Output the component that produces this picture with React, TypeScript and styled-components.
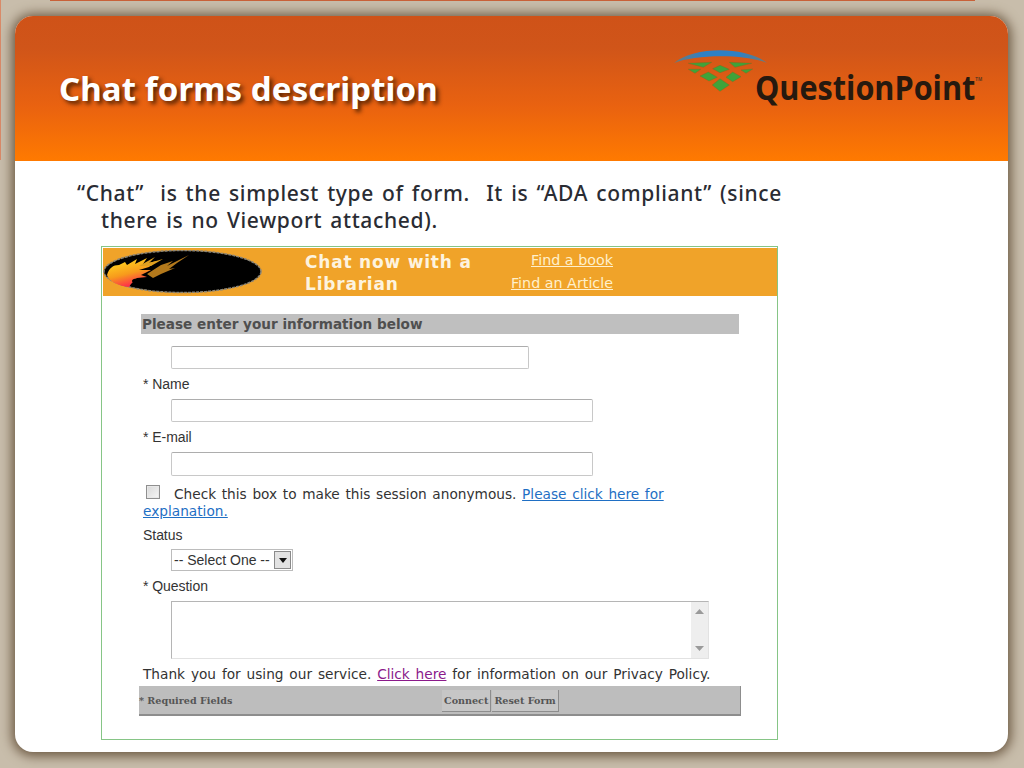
import React from 'react';
import styled, { createGlobalStyle } from 'styled-components';

const GlobalStyle = createGlobalStyle`
  html, body {
    margin: 0;
    padding: 0;
  }
  body {
    width: 1024px;
    height: 768px;
    overflow: hidden;
    font-family: "Liberation Sans", Arial, sans-serif;
  }
`;

const Slide = styled.div`
  box-sizing: border-box;
  width: 1024px;
  height: 768px;
  padding: 16px 16px 16px 15px;
  background:
    linear-gradient(#c9623a, #c9623a) 50px 0 / 925px 1px no-repeat,
    linear-gradient(#d98a68, #d98a68) 0 0 / 1px 160px no-repeat,
    #c8bdab;
`;

const Card = styled.div`
  height: 736px;
  border-radius: 18px;
  background: #ffffff;
  overflow: hidden;
  box-shadow: 0 1px 12px 3px #6a5740;
`;

const Header = styled.header`
  display: flex;
  justify-content: space-between;
  height: 145px;
  background: linear-gradient(#cf5218 0%, #d05519 22%, #e96210 62%, #ff7a00 100%);
`;

const Title = styled.h1`
  margin: 52px 0 0 44px;
  font-family: "Noto Sans", "Open Sans", sans-serif;
  font-size: 33px;
  line-height: 42px;
  font-weight: 700;
  letter-spacing: 0.1px;
  color: #ffffff;
  text-shadow: 3px 3px 4px rgba(60, 25, 0, 0.85);
`;

const Logo = styled.div`
  display: flex;
  flex-direction: column;
  width: 334px;
  padding-top: 33px;
`;

const LogoWord = styled.div`
  display: flex;
  width: 260px;
  margin: -24px 0 0 81px;
  font-family: "Open Sans", "Noto Sans", sans-serif;
  font-size: 34px;
  line-height: 36px;
  font-weight: 700;
  white-space: nowrap;
  color: #26190f;
  transform: scaleX(0.9);
  transform-origin: left center;
`;

const LogoMark = styled.span`
  font-size: 5px;
  line-height: 20px;
  color: #5a3a20;
`;

const Body = styled.main`
  padding: 19px 0 0 62px;
`;

const Intro = styled.p`
  width: 713px;
  margin: 0;
  padding-left: 24px;
  box-sizing: border-box;
  text-indent: -24px;
  font-family: "Noto Sans", "Open Sans", sans-serif;
  font-size: 21px;
  line-height: 27px;
  font-weight: 500;
  letter-spacing: 0.66px;
  word-spacing: 2px;
  white-space: pre-wrap;
  color: #2a2c33;
`;

const FormFrame = styled.section`
  box-sizing: border-box;
  width: 677px;
  height: 494px;
  margin: 12px 0 0 24px;
  padding: 1px 0 1px 1px;
  border: 1px solid #86c586;
`;

const Banner = styled.div`
  display: flex;
  align-items: flex-start;
  height: 48px;
  background: #f0a329;
`;

const BannerTitle = styled.div`
  width: 190px;
  margin: 3px 0 0 42px;
  font-family: "DejaVu Sans", Verdana, sans-serif;
  font-size: 17px;
  line-height: 22px;
  font-weight: 700;
  letter-spacing: 0.8px;
  color: #fdf3df;
`;

const BannerLinks = styled.div`
  display: flex;
  flex-direction: column;
  align-items: flex-end;
  width: 118px;
  padding-top: 1px;
  font-family: "DejaVu Sans", Verdana, sans-serif;
  font-size: 14.3px;
  line-height: 23px;
`;

const BannerLink = styled.a`
  color: #fff0cc;
  text-decoration: underline;
`;

const FormBody = styled.form`
  display: flex;
  flex-direction: column;
  align-items: flex-start;
  padding: 18px 0 0 38px;
`;

const SectionBar = styled.div`
  box-sizing: border-box;
  width: 598px;
  height: 20px;
  padding-left: 1px;
  font-family: "DejaVu Sans", Verdana, sans-serif;
  font-size: 13.6px;
  line-height: 21px;
  font-weight: 700;
  color: #4f4f4f;
  background: #bfbfbf;
`;

const TextInput = styled.input<{ $width: number; $height: number; $top: number }>`
  box-sizing: border-box;
  display: block;
  width: ${p => p.$width}px;
  height: ${p => p.$height}px;
  margin: ${p => p.$top}px 0 0 30px;
  padding: 0 3px;
  border: 1px solid #c8c8c8;
  border-top-color: #adadad;
  border-radius: 2px;
  background: #ffffff;
`;

const FieldLabel = styled.label<{ $top: number }>`
  display: block;
  margin: ${p => p.$top}px 0 0 2px;
  font-size: 14px;
  letter-spacing: -0.05px;
  line-height: 16px;
  color: #333333;
`;

const AnonRow = styled.div`
  width: 560px;
  margin: 9px 0 0 2px;
  font-family: "DejaVu Sans", Verdana, sans-serif;
  font-size: 13.7px;
  line-height: 17px;
  word-spacing: 1.3px;
  color: #333333;
`;

const CheckBox = styled.span`
  box-sizing: border-box;
  display: inline-block;
  width: 14px;
  height: 14px;
  margin: 0 14px 0 3px;
  vertical-align: 0;
  border: 1px solid #8f8f8f;
  background: linear-gradient(135deg, #d8d8d8, #f6f6f6);
  box-shadow: inset 0 0 0 1px #e8e8e8;
`;

const TextLink = styled.a<{ $visited?: boolean }>`
  color: ${p => (p.$visited ? '#8b1a8b' : '#1f6fc4')};
  text-decoration: underline;
`;

const SelectBox = styled.div`
  box-sizing: border-box;
  display: flex;
  align-items: center;
  justify-content: space-between;
  width: 122px;
  height: 22px;
  margin: 6px 0 0 30px;
  padding: 0 1px 0 2px;
  font-size: 14px;
  color: #333333;
  border: 1px solid #bcbcbc;
`;

const SelectArrow = styled.span`
  box-sizing: border-box;
  display: flex;
  align-items: center;
  justify-content: center;
  width: 17px;
  height: 18px;
  border: 1px solid #8a8a8a;
  background: #e2e2e2;
`;

const AreaBox = styled.div`
  box-sizing: border-box;
  display: flex;
  justify-content: flex-end;
  width: 538px;
  height: 58px;
  margin: 7px 0 0 30px;
  border: 1px solid #b5b5b5;
  border-right-color: #e2e2e2;
  border-bottom-color: #e2e2e2;
`;

const ScrollBar = styled.div`
  display: flex;
  flex-direction: column;
  align-items: center;
  justify-content: space-between;
  width: 17px;
  padding: 7px 0;
  box-sizing: border-box;
  background: #eeeeee;
`;

const Thanks = styled.p`
  margin: 7px 0 0 2px;
  font-family: "DejaVu Sans", Verdana, sans-serif;
  font-size: 13.7px;
  line-height: 17px;
  word-spacing: 1.5px;
  color: #333333;
`;

const FooterBar = styled.div`
  box-sizing: border-box;
  display: flex;
  align-items: center;
  width: 602px;
  height: 30px;
  margin: 3px 0 0 -2px;
  padding-top: 1px;
  font-family: "DejaVu Serif", Georgia, serif;
  font-size: 9.6px;
  font-weight: 700;
  color: #555555;
  background: #bdbdbd;
  border-right: 1px solid #8d8d8d;
  border-bottom: 2px solid #8d8d8d;
`;

const FooterNote = styled.span`
  width: 303px;
`;

const FooterButton = styled.span`
  box-sizing: border-box;
  display: flex;
  align-items: center;
  height: 22px;
  padding: 0 2px;
  margin-right: 1px;
  border-right: 1px solid #8d8d8d;
  border-bottom: 1px solid #8d8d8d;
  background: #c6c6c6;
`;

const LogoIcon = () => (
  <svg width="96" height="44" viewBox="0 0 96 44">
    <defs>
      <linearGradient id="arcFill" x1="0" x2="1" y1="0" y2="0">
        <stop offset="0" stopColor="#6d7a78" />
        <stop offset="0.3" stopColor="#2f80c4" />
        <stop offset="0.7" stopColor="#2f80c4" />
        <stop offset="1" stopColor="#6d7a78" />
      </linearGradient>
    </defs>
    <path d="M0 14C20 -3 72 -3 93 14C72 5 22 5 0 14Z" fill="url(#arcFill)" />
    <g fill="#3fa33a" stroke="#7a6a20" strokeWidth="0.4">
      <path d="M14.300 14.300L37.700 13.300L29.300 18.300Z" />
      <path d="M55.300 13.300L77.700 14.300L61 18.300Z" />
      <path d="M14.300 20.300L26.700 20.300L21 24.300Z" />
      <path d="M67 21L78.700 20L72 24.300Z" />
      <path d="M46 16.300L55.300 20.300L46 23.700L38.700 19.700Z" />
      <path d="M34.300 23L43.300 28.300L35 32L26 27Z" />
      <path d="M58.700 23L67 27.700L58.700 32.700L52 28.300Z" />
      <path d="M46 29.700L55.300 36L46 42.300L38.300 36Z" />
    </g>
  </svg>
);

const FlameBadge = () => (
  <svg width="160" height="44" viewBox="0 0 160 44" style={{ flex: 'none', margin: '2px 0 0 0' }}>
    <defs>
      <linearGradient id="flameFill" x1="0" x2="0.35" y1="0.2" y2="1">
        <stop offset="0" stopColor="#ffd21f" />
        <stop offset="0.55" stopColor="#f79a1c" />
        <stop offset="1" stopColor="#ff2f4a" />
      </linearGradient>
    </defs>
    <ellipse cx="79.500" cy="21.500" rx="78.500" ry="21" fill="#000000" stroke="#8a8578" strokeWidth="1.500" strokeDasharray="3 1" />
    <path d="M4 25C6 18 10 15 16 15L22 12L24 15L34 9L32 14L44 8L40 14L54 11L46 17L36 20L48 20L38 25L44 27L34 28L28 34L26 37C16 36 6 32 4 25Z" fill="url(#flameFill)" />
    <path d="M44 24L58 15L70 11L64 16L86 5L74 13L66 19L72 18L58 24L50 28Z" fill="#b3791c" />
    <path d="M36 16L52 7L46 13L60 9L48 16Z" fill="#e0a020" />
    <ellipse cx="34" cy="31" rx="5" ry="2.500" fill="#000000" />
  </svg>
);

export default function App() {
  return (
    <>
      <GlobalStyle />
      <Slide>
        <Card>
          <Header>
            <Title>Chat forms description</Title>
            <Logo>
              <LogoIcon />
              <LogoWord>QuestionPoint<LogoMark>TM</LogoMark></LogoWord>
            </Logo>
          </Header>
          <Body>
            <Intro>{'“Chat”  is the simplest type of form.  It is “ADA compliant” (since there is no Viewport attached).'}</Intro>
            <FormFrame>
              <Banner>
                <FlameBadge />
                <BannerTitle>Chat now with a Librarian</BannerTitle>
                <BannerLinks>
                  <BannerLink>Find a book</BannerLink>
                  <BannerLink>Find an Article</BannerLink>
                </BannerLinks>
              </Banner>
              <FormBody>
                <SectionBar>Please enter your information below</SectionBar>
                <TextInput $width={358} $height={23} $top={12} />
                <FieldLabel $top={7}>* Name</FieldLabel>
                <TextInput $width={422} $height={23} $top={7} />
                <FieldLabel $top={7}>* E-mail</FieldLabel>
                <TextInput $width={422} $height={24} $top={7} />
                <AnonRow>
                  <CheckBox />Check this box to make this session anonymous. <TextLink>Please click here for</TextLink> <TextLink>explanation.</TextLink>
                </AnonRow>
                <FieldLabel $top={7}>Status</FieldLabel>
                <SelectBox>
                  -- Select One --
                  <SelectArrow>
                    <svg width="8" height="5" viewBox="0 0 8 5"><path d="M0 0H8L4 5Z" fill="#111111" /></svg>
                  </SelectArrow>
                </SelectBox>
                <FieldLabel $top={7}>* Question</FieldLabel>
                <AreaBox>
                  <ScrollBar>
                    <svg width="9" height="5" viewBox="0 0 9 5"><path d="M0 5L4.500 0L9 5Z" fill="#9a9a9a" /></svg>
                    <svg width="9" height="5" viewBox="0 0 9 5"><path d="M0 0H9L4.500 5Z" fill="#9a9a9a" /></svg>
                  </ScrollBar>
                </AreaBox>
                <Thanks>
                  Thank you for using our service. <TextLink $visited>Click here</TextLink> for information on our Privacy Policy.
                </Thanks>
                <FooterBar>
                  <FooterNote>* Required Fields</FooterNote>
                  <FooterButton>Connect</FooterButton>
                  <FooterButton>Reset Form</FooterButton>
                </FooterBar>
              </FormBody>
            </FormFrame>
          </Body>
        </Card>
      </Slide>
    </>
  );
}
